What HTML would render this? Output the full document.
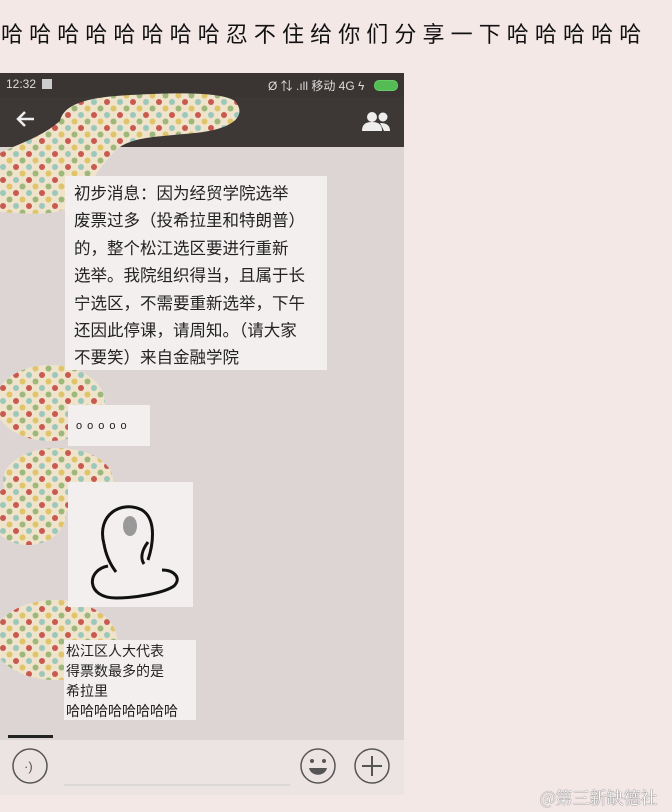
<!DOCTYPE html>
<html><head><meta charset="utf-8"><style>
body{margin:0;width:672px;height:812px;background:#f4e8e7;position:relative;overflow:hidden;font-family:"Liberation Sans","Noto Sans CJK SC",sans-serif}
.t{position:absolute;left:1px;top:17px;font-size:22px;letter-spacing:6.1px;color:#111;white-space:nowrap;font-family:"Noto Sans CJK SC",sans-serif;font-weight:400}
.ph{position:absolute;left:0;top:73px;width:404px;height:722px;background:#ddd5d4;overflow:hidden}
.sb{position:absolute;left:0;top:0;width:404px;height:24px;background:#3a3432;color:#ddd;font-size:12px}
.nb{position:absolute;left:0;top:24px;width:404px;height:50px;background:#3d3735}
.bub{position:absolute;background:#f3efee;color:#222}
.m{left:65px;top:103px;width:262px;height:194px;font-size:16.5px;line-height:27.4px;padding:5px 0 0 9px;box-sizing:border-box}
.l{left:64px;top:567px;width:132px;height:80px;font-size:14px;line-height:20px;padding:1px 0 0 2px;box-sizing:border-box}
.bar{position:absolute;left:0;top:667px;width:404px;height:55px;background:#ece4e3}
.wm{position:absolute;left:540px;top:784px;font-size:17px;color:#fff;font-family:"Noto Serif CJK SC",serif;text-shadow:0 0 1px #666,0 0 1px #666;white-space:nowrap}
</style></head><body>
<div class="t">哈哈哈哈哈哈哈哈忍不住给你们分享一下哈哈哈哈哈</div>
<div class="ph">
<div class="sb"><span style="position:absolute;left:6px;top:4px">12:32</span><span style="position:absolute;left:42px;top:6px;width:10px;height:10px;background:#ccc"></span><span style="position:absolute;left:268px;top:4px">Ø ⇅ .ıll 移动 4G ϟ</span><span style="position:absolute;left:374px;top:7px;width:22px;height:9px;border:1px solid #6c6;border-radius:5px;background:#5b5"></span></div>
<div class="nb"><svg width="404" height="50" style="position:absolute;left:0;top:0"><path d="M34 22H18M25 15l-7 7 7 7" stroke="#eee" stroke-width="2.5" fill="none"/><circle cx="372" cy="20" r="5" fill="#eee"/><path d="M362 34c0-7 4-9 10-9s10 2 10 9z" fill="#eee"/><circle cx="383" cy="20" r="4.5" fill="#eee"/><path d="M380 26c6 0 10 2 10 8h-6z" fill="#eee"/></svg></div>
<svg width="404" height="722" style="position:absolute;left:0;top:0">
<defs><pattern id="p" width="26" height="26" patternUnits="userSpaceOnUse"><rect width="26" height="26" fill="#efe3cb"/><circle cx="3" cy="3" r="3" fill="#c85a50"/><circle cx="16" cy="3" r="3" fill="#9cc8bc"/><circle cx="9.5" cy="9.5" r="3" fill="#e0c46a"/><circle cx="22.5" cy="9.5" r="3" fill="#9db87a"/><circle cx="3" cy="16" r="3" fill="#9cc8bc"/><circle cx="16" cy="16" r="3" fill="#c85a50"/><circle cx="9.5" cy="22.5" r="3" fill="#9db87a"/><circle cx="22.5" cy="22.5" r="3" fill="#e0c46a"/></pattern></defs>
<g fill="url(#p)">
<path d="M60 48c4-18 30-24 70-26 40-2 90-4 105 6 12 14 0 28-40 32-40 4-60 4-75 14-15 10-30 40-45 55-15 15-40 12-75 10V80c20-10 40-15 60-32z"/>
<ellipse cx="50" cy="330" rx="55" ry="38"/><ellipse cx="58" cy="407" rx="55" ry="32"/><ellipse cx="28" cy="440" rx="38" ry="32"/>
<ellipse cx="55" cy="567" rx="62" ry="40"/></g>
</svg>
<div class="bub m">初步消息：因为经贸学院选举<br>废票过多（投希拉里和特朗普）<br>的，整个松江选区要进行重新<br>选举。我院组织得当，且属于长<br>宁选区，不需要重新选举，下午<br>还因此停课，请周知。（请大家<br>不要笑）来自金融学院</div>
<div class="bub" style="left:68px;top:332px;width:82px;height:41px;font-size:11px;letter-spacing:5px;padding:15px 0 0 8px;box-sizing:border-box;white-space:nowrap">ooooo</div>
<div class="bub" style="left:68px;top:409px;width:125px;height:125px"><svg width="125" height="125"><path d="M36 62c-8-30 18-44 38-34 16 10 10 38 6 50M80 60c-6 8-8 16-4 22M36 62c2 12 6 20 12 28M40 84c-22 4-22 32 8 32 20 0 48-5 58-12 8-8 0-16-12-16" stroke="#111" stroke-width="3" fill="none"/><ellipse cx="62" cy="44" rx="7" ry="10" fill="#999"/></svg></div>
<div class="bub l">松江区人大代表<br>得票数最多的是<br>希拉里<br>哈哈哈哈哈哈哈哈</div>
<div style="position:absolute;left:8px;top:662px;width:45px;height:3px;background:#222"></div>
<div class="bar"><svg width="404" height="55"><circle cx="30" cy="26" r="17" fill="none" stroke="#555" stroke-width="1.5"/><text x="24" y="31" font-size="13" fill="#555">·)</text><line x1="64" y1="45" x2="290" y2="45" stroke="#ccc"/><circle cx="318" cy="26" r="17" fill="none" stroke="#555" stroke-width="1.5"/><circle cx="312" cy="21" r="2" fill="#555"/><circle cx="324" cy="21" r="2" fill="#555"/><path d="M309 28h18c-2 9-16 9-18 0z" fill="#555"/><circle cx="372" cy="26" r="17" fill="none" stroke="#555" stroke-width="1.5"/><path d="M362 26h20M372 16v20" stroke="#555" stroke-width="2"/></svg></div>
</div>
<div class="wm">@第三新缺德社</div>
</body></html>
